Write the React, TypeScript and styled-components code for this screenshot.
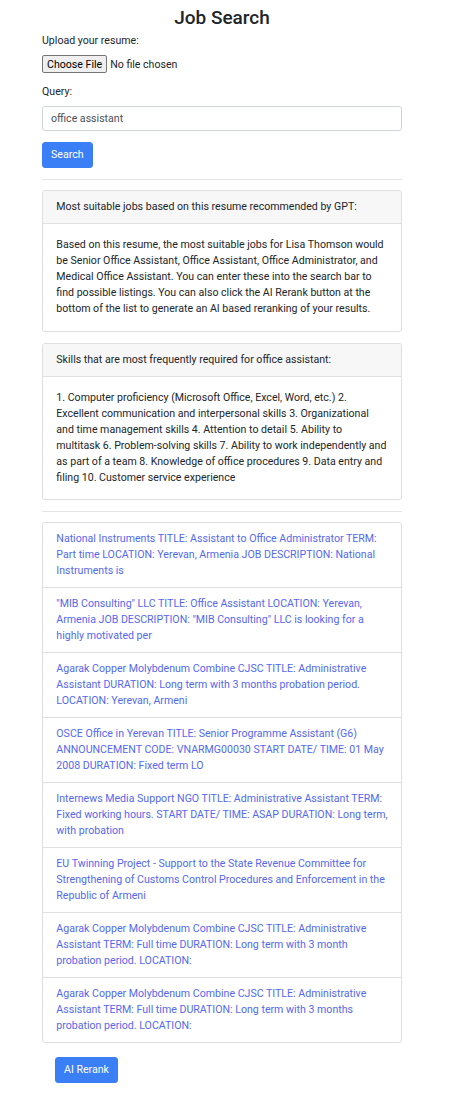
import React, {useState} from 'react';
import styled, {createGlobalStyle} from 'styled-components';

const jobs: string[] = [
    'National Instruments TITLE: Assistant to Office Administrator TERM: Part time LOCATION: Yerevan, Armenia JOB DESCRIPTION: National Instruments is',
    '"MIB Consulting" LLC TITLE: Office Assistant LOCATION: Yerevan, Armenia JOB DESCRIPTION: "MIB Consulting" LLC is looking for a highly motivated per',
    'Agarak Copper Molybdenum Combine CJSC TITLE: Administrative Assistant DURATION: Long term with 3 months probation period. LOCATION: Yerevan, Armeni',
    'OSCE Office in Yerevan TITLE: Senior Programme Assistant (G6) ANNOUNCEMENT CODE: VNARMG00030 START DATE/ TIME: 01 May 2008 DURATION: Fixed term LO',
    'Internews Media Support NGO TITLE: Administrative Assistant TERM: Fixed working hours. START DATE/ TIME: ASAP DURATION: Long term, with probation',
    'EU Twinning Project - Support to the State Revenue Committee for Strengthening of Customs Control Procedures and Enforcement in the Republic of Armeni',
    'Agarak Copper Molybdenum Combine CJSC TITLE: Administrative Assistant TERM: Full time DURATION: Long term with 3 month probation period. LOCATION:',
    'Agarak Copper Molybdenum Combine CJSC TITLE: Administrative Assistant TERM: Full time DURATION: Long term with 3 months probation period. LOCATION:',
];

const recommendation =
    'Based on this resume, the most suitable jobs for Lisa Thomson would be Senior Office Assistant, Office Assistant, Office Administrator, and Medical Office Assistant. You can enter these into the search bar to find possible listings. You can also click the AI Rerank button at the bottom of the list to generate an AI based reranking of your results.';

const skills =
    '1. Computer proficiency (Microsoft Office, Excel, Word, etc.) 2. Excellent communication and interpersonal skills 3. Organizational and time management skills 4. Attention to detail 5. Ability to multitask 6. Problem-solving skills 7. Ability to work independently and as part of a team 8. Knowledge of office procedures 9. Data entry and filing 10. Customer service experience';

const App: React.FC = () => {
    const [query, setQuery] = useState<string>('office assistant');

    return (
        <>
            <GlobalStyle/>
            <Page>
                <Title>Job Search</Title>
                <FormGroup>
                    <Label>Upload your resume:</Label>
                    <FileInput type="file"/>
                </FormGroup>
                <FormGroup>
                    <Label>Query:</Label>
                    <TextInput value={query} onChange={(e) => setQuery(e.target.value)}/>
                </FormGroup>
                <PrimaryButton>Search</PrimaryButton>
                <Divider/>
                <Card>
                    <CardHeader>Most suitable jobs based on this resume recommended by GPT:</CardHeader>
                    <CardBody>{recommendation}</CardBody>
                </Card>
                <Card>
                    <CardHeader>Skills that are most frequently required for office assistant:</CardHeader>
                    <CardBody>{skills}</CardBody>
                </Card>
                <Divider/>
                <ListGroup>
                    {jobs.map((job, index) => (
                        <ListItem key={index}>
                            <JobLink href="#">{job}</JobLink>
                        </ListItem>
                    ))}
                </ListGroup>
                <RerankButton>AI Rerank</RerankButton>
            </Page>
        </>
    );
};

const GlobalStyle = createGlobalStyle`
  body {
    margin: 0;
    background: #fff;
    font-family: Roboto, "Liberation Sans", sans-serif;
    font-size: 10.6px;
    line-height: 16px;
    color: #212529;
  }
`;

const Page = styled.div`
  width: 360px;
  padding: 5px 0 24px 42px;
`;

const Title = styled.h2`
  margin: 0 0 3px;
  text-align: center;
  font-size: 19px;
  line-height: 25px;
  font-weight: 500;
`;

const FormGroup = styled.div`
  display: flex;
  flex-direction: column;
  align-items: flex-start;
  margin-bottom: 11px;
`;

const Label = styled.label`
  margin-bottom: 6px;
`;

const FileInput = styled.input`
  font-family: inherit;
  font-size: 10.6px;
  height: 18px;
  color: #212529;

  &::file-selector-button {
    font-family: inherit;
    font-size: 10.6px;
    height: 18px;
    padding: 0 4px;
    margin-right: 3px;
    background: #efefef;
    border: 1px solid #767676;
    border-radius: 2px;
    color: #000;
  }
`;

const TextInput = styled.input`
  box-sizing: border-box;
  width: 100%;
  height: 25px;
  padding: 4px 8px;
  border: 1px solid #ced4da;
  border-radius: 3px;
  font-family: inherit;
  font-size: 10.6px;
  color: #495057;
  outline: none;
`;

const PrimaryButton = styled.button`
  height: 26px;
  padding: 4px 8px;
  border: 1px solid #3b7ff6;
  border-radius: 3px;
  background: #3b7ff6;
  color: #fff;
  font-family: inherit;
  font-size: 10.6px;
  line-height: 16px;
  cursor: pointer;
`;

const RerankButton = styled(PrimaryButton)`
  margin: 14px 0 0 13px;
`;

const Divider = styled.hr`
  margin: 10.5px 0;
  border: 0;
  border-top: 1px solid #e5e5e5;
`;

const Card = styled.div`
  border: 1px solid #dfdfdf;
  border-radius: 3px;
  margin-bottom: 11px;
  overflow: hidden;

  &:last-of-type {
    margin-bottom: 0;
  }
`;

const CardHeader = styled.div`
  padding: 8px 13.33px;
  background: #f7f7f7;
  border-bottom: 1px solid #dfdfdf;
`;

const CardBody = styled.div`
  padding: 13.33px;
`;

const ListGroup = styled.ul`
  margin: 0;
  padding: 0;
  list-style: none;
  border: 1px solid #dfdfdf;
  border-radius: 3px;
`;

const ListItem = styled.li`
  padding: 8px 13.33px;
  border-top: 1px solid #dfdfdf;

  &:first-child {
    border-top: 0;
  }
`;

const JobLink = styled.a`
  color: #5468f0;
  text-decoration: none;

  &:hover {
    text-decoration: underline;
  }
`;

export default App;
